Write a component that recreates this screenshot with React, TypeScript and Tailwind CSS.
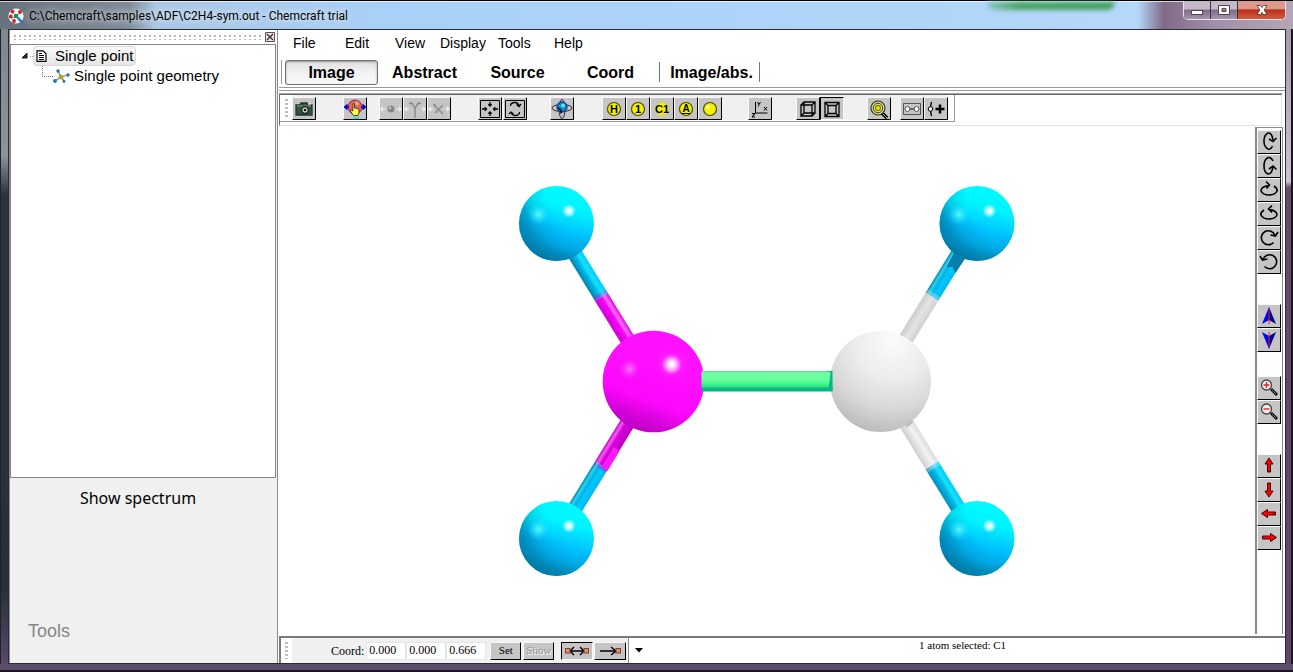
import type { ReactNode } from "react";

const raised =
  "flex shrink-0 items-center justify-center border border-t-[#f8f8f8] border-l-[#f8f8f8] border-r-black border-b-black bg-[#c5c5c5]";
const pressed =
  "flex shrink-0 items-center justify-center border border-t-black border-l-black border-r-[#f8f8f8] border-b-[#f8f8f8] bg-[#c5c5c5]";

function ToolButton({ label, down = false, disabled = false, children }: { label: string; down?: boolean; disabled?: boolean; children: ReactNode }) {
  return (
    <button aria-label={label} aria-pressed={down} disabled={disabled} className={`h-[23px] w-6 ${down ? pressed : raised}`}>
      <svg viewBox="0 0 22 20" width="22" height="20" fill="none" stroke="#000" strokeWidth="1.3">
        {children}
      </svg>
    </button>
  );
}

function SideButton({ label, children }: { label: string; children: ReactNode }) {
  return (
    <button aria-label={label} className={`h-6 w-6 ${raised}`}>
      <svg viewBox="0 0 22 22" width="22" height="22" fill="none" stroke="#000" strokeWidth="1.6">
        {children}
      </svg>
    </button>
  );
}

function Grip() {
  return <span className="my-1 w-[3px] shrink-0 bg-[repeating-linear-gradient(180deg,#bdbdbd_0_2px,transparent_2px_4px)]" />;
}

function YellowDisc({ text, under = false, pale = false }: { text: string; under?: boolean; pale?: boolean }) {
  return (
    <>
      <circle cx="11" cy="10" r="6.5" fill="#f4f000" stroke={pale ? "#d8d840" : "#4c4c00"} strokeWidth="1.2" />
      <text x="11" y={under ? 13 : 14} textAnchor="middle" fontSize={under ? 10 : 11} fontWeight="700" fontFamily="Liberation Sans, sans-serif" fill="#000" stroke="none">
        {text}
      </text>
      {under && <path d="M7 14.5h8" strokeWidth="1" />}
    </>
  );
}

function AppLogo() {
  return (
    <svg viewBox="0 0 16 16" width="16" height="16" aria-hidden="true">
      <circle cx="8" cy="8" r="7.6" fill="#f4f8f8" />
      <path d="M8 8L4 3.500M8 8l4.500-3M8 8l-5 3M8 8l5 5" stroke="#8aa" strokeWidth="1" />
      <circle cx="4.500" cy="3.500" r="1.900" fill="#d32020" />
      <circle cx="12" cy="4" r="1.900" fill="#d32020" />
      <circle cx="2.800" cy="8.500" r="1.900" fill="#c02828" />
      <circle cx="6" cy="13" r="1.900" fill="#d32020" />
      <rect x="6" y="6" width="4" height="4" fill="#18934d" />
      <path d="M10.500 10.500l3.500 4" stroke="#2379c9" strokeWidth="2.600" strokeLinecap="round" />
    </svg>
  );
}

function TitleBar() {
  return (
    <header className="flex h-[29px] shrink-0 items-start border-t border-black bg-[linear-gradient(90deg,#66717c_0%,#7f8c98_10%,#a9c7e4_12%,#a9d0f6_30%,#b4d7fa_88%,#806a88_90%,#a190a6_94%,#b5a6b7_100%)]">
      <div className="flex h-7 flex-1 items-center gap-[5px] border-t border-white/70 pl-2">
        <AppLogo />
        <h1 className="flex-1 font-[Roboto,sans-serif] text-xs text-black [text-shadow:0_0_6px_#ffffffb0,0_0_10px_#ffffffb0]">
          C:\Chemcraft\samples\ADF\C2H4-sym.out - Chemcraft trial
        </h1>
        <span className="mr-[68px] h-2 w-32 self-start rounded-b-full bg-[linear-gradient(90deg,#8ac8c0,#4aa463_25%,#45a05c)] blur-[2px]" />
      </div>
      <div className="mr-[7px] flex h-[19px] overflow-hidden rounded-b-[5px] border border-t-0 border-[#e9e2ea] bg-[#493a4e]">
        <button aria-label="Minimize" className="flex w-[27px] items-center justify-center border-r border-[#3c3040] bg-[linear-gradient(#c5b8c8_0_45%,#7e6c84_50%,#a594aa)]">
          <svg width="14" height="14" viewBox="0 0 14 14"><rect x="1.500" y="7.500" width="11" height="4" fill="#fff" stroke="#504756" /></svg>
        </button>
        <button aria-label="Maximize" className="flex w-[27px] items-center justify-center border-r border-[#3c3040] bg-[linear-gradient(#c5b8c8_0_45%,#7e6c84_50%,#a594aa)]">
          <svg width="14" height="14" viewBox="0 0 14 14"><path d="M1.500 2.500h11v9h-11zM5 5.500v3h4v-3z" fill="#fff" fillRule="evenodd" stroke="#504756" /></svg>
        </button>
        <button aria-label="Close" className="flex w-[47px] items-center justify-center bg-[linear-gradient(#dd9a8c_0_42%,#bb2f18_50%,#d35d3e)]">
          <svg width="14" height="14" viewBox="0 0 14 14"><path d="M2 2.500h3.500L7 4.500l1.500-2H12L9.200 7l2.800 4.500H8.500L7 9.500l-1.500 2H2L4.800 7z" fill="#fff" stroke="#59393c" strokeWidth=".9" /></svg>
        </button>
      </div>
    </header>
  );
}

function ProjectPanel() {
  return (
    <aside className="flex w-[269px] shrink-0 flex-col border-r border-l border-[#8b8b8b] bg-[#f0f0f0]">
      <div className="flex h-3.5 shrink-0 items-center gap-1 bg-white pl-1">
        <span className="h-[5px] flex-1 bg-[radial-gradient(circle_at_1px_1px,#b8b8b8_1px,transparent_1px)] bg-[size:5px_4px]" />
        <button aria-label="Close panel" className="mr-0.5">
          <svg width="10" height="10" viewBox="0 0 10 10"><path d="M.5.5h9v9h-9z" fill="#efe4ea" stroke="#6a4a58" /><path d="M2 2l6 6M8 2L2 8" stroke="#333" strokeWidth="1.400" /></svg>
        </button>
      </div>
      <ul className="mr-px flex-1 border border-[#858585] bg-white pt-px font-['Liberation_Sans',sans-serif] text-[15px] leading-5 text-black">
        <li>
          <div className="flex h-5 items-center pl-2">
            <svg width="14" height="12" viewBox="0 0 14 12"><path d="M8 3v5H3z" fill="#333" stroke="#111" /><path d="M11 6.500h3" stroke="#999" strokeDasharray="1 1" /></svg>
            <button className="flex h-5 items-center rounded-sm border border-[#d8d8d8] bg-linear-to-b from-[#f9f9f9] to-[#e6e6e6] px-0.5">
              <svg width="11" height="12" viewBox="0 0 11 12" fill="#fff" stroke="#000" strokeWidth="1.200"><path d="M1 .8h6l3 3v7.500H1z" /><path d="M3 3.500h3M3 5.500h5M3 7.500h5M3 9.500h5" strokeWidth="1" /></svg>
              <span className="ml-2">Single point</span>
            </button>
          </div>
          <ul>
            <li className="flex h-5 items-center pl-[31px]">
              <svg width="11" height="20" viewBox="0 0 11 20"><path d="M.5 0v10.500H11" stroke="#777" strokeDasharray="1 1" fill="none" /></svg>
              <svg width="17" height="15" viewBox="0 0 17 15"><path d="M8 8L5 2M8 8l7-2M8 8l-6 4M8 8l3 4" stroke="#5d8a96" strokeWidth="1.300" fill="none" /><circle cx="5" cy="2" r="1.700" fill="#2672ad" /><circle cx="15" cy="6" r="1.700" fill="#2672ad" /><circle cx="2" cy="12" r="1.900" fill="#2672ad" /><circle cx="11" cy="12.500" r="1.400" fill="#2672ad" /><circle cx="8" cy="8" r="2.500" fill="#b5a431" /></svg>
              <button className="ml-1">Single point geometry</button>
            </li>
          </ul>
        </li>
      </ul>
      <div className="flex h-[185px] shrink-0 flex-col justify-between px-[18px] pt-2 pb-5">
        <button className="w-[220px] font-['Noto_Sans',sans-serif] text-base leading-6 text-black">Show spectrum</button>
        <p className="font-['Liberation_Sans',sans-serif] text-lg leading-6 text-[#868686]">Tools</p>
      </div>
    </aside>
  );
}

function MenuBar() {
  return (
    <nav className="flex h-[26px] shrink-0 items-center pl-3.5 font-['Liberation_Sans',sans-serif] text-sm text-black">
      <button className="w-[52px] text-left">File</button>
      <button className="w-[50px] text-left">Edit</button>
      <button className="w-[45px] text-left">View</button>
      <button className="w-[58px] text-left">Display</button>
      <button className="w-14 text-left">Tools</button>
      <button className="text-left">Help</button>
    </nav>
  );
}

function ViewTabs() {
  const tab = "w-[93px] pt-0.5";
  return (
    <div role="tablist" className="flex h-8 shrink-0 items-center border-b border-[#9a9a9a] pt-px pl-0.5 font-['Liberation_Sans',sans-serif] text-base font-bold text-black">
      <span className="mr-[3px] h-6 w-px bg-[#999]" />
      <button role="tab" aria-selected="true" className="h-[25px] w-[93px] rounded-[3px] border border-[#6f6f6f] bg-linear-to-b from-[#dedede] via-[#f2f2f2] to-[#f8f8f8] pt-px leading-5 shadow-[inset_0_1px_2px_#9a9a9a]">Image</button>
      <button role="tab" aria-selected="false" className={tab}>Abstract</button>
      <button role="tab" aria-selected="false" className={tab}>Source</button>
      <button role="tab" aria-selected="false" className={tab}>Coord</button>
      <span className="ml-0.5 h-5 w-px bg-[#777]" />
      <button role="tab" aria-selected="false" className="w-[99px] pt-0.5 pl-1">Image/abs.</button>
      <span className="h-5 w-px bg-[#777]" />
    </div>
  );
}

function Toolbar() {
  return (
    <div className="mt-0.5 mr-[3px] shrink-0 border-t border-[#a0a0a0]">
      <div className="flex h-8 items-start border border-t-[#696969] border-r-[#e4e4e4] border-b-[#e4e4e4] border-l-[#696969]">
        <div className="flex h-[27px] gap-1 border-r border-b border-[#9a9a9a] pr-1.5 pl-[5px]">
          <Grip />
          <div className="flex h-[25px] items-end bg-[#f0f0f0]">
            <ToolButton label="Save image">
              <path d="M3 6h4l1-2h6l1 2h4v10H3z" fill="#35543f" stroke="#1d3827" /><path d="M4 7h14" stroke="#789078" /><circle cx="12" cy="11" r="3.300" fill="#c7cfc4" stroke="#10251a" /><circle cx="12" cy="11" r="1.300" fill="#111" stroke="none" /><path d="M15 5h3" stroke="#dfe8dd" />
            </ToolButton>
            <span className="w-[27px]" />
            <ToolButton label="Rotate by mouse">
              <circle cx="11" cy="8" r="7" fill="#e26363" stroke="#812" strokeWidth=".8" /><circle cx="13" cy="4.500" r="2" fill="#f4a0a0" stroke="none" /><path d="M0 8h5M3.500 5.500L1 8l2.500 2.500M22 8h-5M18.500 5.500L21 8l-2.500 2.500" stroke="#0000d0" strokeWidth="1.600" /><path d="M9 10.500V5q.8-1 1.600 0v4l1.500.3 1.500.5 1.400.7v3l-1 3H9.500L6 11.500q.5-1.500 3 .5z" fill="#ffff50" stroke="#352000" strokeWidth=".8" /><path d="M9 17.500h6V20H9z" fill="#50d4cf" stroke="none" />
            </ToolButton>
            <span className="w-3" />
            <ToolButton label="Drag atom" disabled>
              <circle cx="11" cy="10" r="3.500" fill="#888" stroke="none" /><path d="M6 10H1M3 8l-2 2 2 2M16 10h5M19 8l2 2-2 2" stroke="#f0f0f0" strokeWidth="1.200" /><circle cx="10" cy="9" r="1.200" fill="#ccc" stroke="none" />
            </ToolButton>
            <ToolButton label="Drag fragment" disabled>
              <path d="M11 19V9L7 3M11 9l4-6M5 4.500h3M14 4.500h3" stroke="#8c8c8c" strokeWidth="1.500" /><path d="M5 10H1M3 8l-2 2 2 2M17 10h4M19 8l2 2-2 2" stroke="#f0f0f0" strokeWidth="1.200" />
            </ToolButton>
            <ToolButton label="Drag bond" disabled>
              <path d="M6 6l9 9M7 14l8-8M5 6h3" stroke="#8c8c8c" strokeWidth="1.500" /><path d="M5 10H1M3 8l-2 2 2 2M17 10h4M19 8l2 2-2 2" stroke="#f0f0f0" strokeWidth="1.200" />
            </ToolButton>
            <span className="w-[27px]" />
            <ToolButton label="Center">
              <path d="M1.500 1.500h19v17h-19z" strokeWidth="1" /><path d="M11 3v4M9.300 5.300L11 7l1.700-1.700M11 17v-4M9.300 14.700L11 13l1.700 1.700M3 10h4.500M5.800 8.300L7.500 10l-1.700 1.700M19 10h-4.500M16.200 8.300L14.500 10l1.700 1.700" />
            </ToolButton>
            <span className="w-px" />
            <ToolButton label="Reset rotation">
              <path d="M1.500 1.500h19v17h-19z" strokeWidth="1" /><path d="M6.500 7q0-3.500 4.500-3.500 3.500 0 4 4M12.500 5.500l2.500 2 2-2.500M15.500 13q0 3.500-4.500 3.500-3.500 0-4-4M5 15l2-2 2.500 2" />
            </ToolButton>
            <span className="w-[23px]" />
            <ToolButton label="Orbitals">
              <ellipse cx="11" cy="10" rx="3" ry="9.500" stroke="#402040" strokeWidth="1" /><ellipse cx="11" cy="9" rx="10" ry="3.500" stroke="#402040" strokeWidth="1" /><circle cx="11" cy="8" r="5" fill="#1787c9" stroke="#075082" /><circle cx="12" cy="6.500" r="2" fill="#62e1ef" stroke="none" /><path d="M7 8.500l3 3v3" stroke="#101040" strokeWidth="1.700" />
            </ToolButton>
            <span className="w-7" />
            <ToolButton label="Element labels"><YellowDisc text="H" /></ToolButton>
            <ToolButton label="Number labels"><YellowDisc text="1" /></ToolButton>
            <ToolButton label="Element and number labels"><YellowDisc text="C1" pale /></ToolButton>
            <ToolButton label="Atom types"><YellowDisc text="A" under /></ToolButton>
            <ToolButton label="No labels"><YellowDisc text="" /><circle cx="9" cy="8" r="2" fill="#fffbb0" stroke="none" /></ToolButton>
            <span className="w-[26px]" />
            <ToolButton label="Show axes">
              <path d="M6.500 3v11h12M6.500 14L3 18" strokeWidth="1" /><path d="M8.500 3L10 5.500 11.500 3M10 5.500L9 7.500M15 8l3 3.500M18 8l-3 3.500M3 14.500h3l-3 3.500h3" strokeWidth="1" />
            </ToolButton>
            <span className="w-6" />
            <ToolButton label="Parallel projection">
              <path d="M4 6h11v11H4zM7 3h11v11H7zM4 6l3-3M15 6l3-3M15 17l3-3M4 17l3-3" />
            </ToolButton>
            <ToolButton label="Perspective projection" down>
              <path d="M4 3.500h14v14H4zM7 6.500h8v8H7zM4 3.500l3 3M18 3.500l-3 3M18 17.500l-3-3M4 17.500l3-3" />
            </ToolButton>
            <span className="w-[23px]" />
            <ToolButton label="Find atom">
              <path d="M14 14l5 5" strokeWidth="3.500" /><path d="M15 15l4 4" stroke="#b5b13a" strokeWidth="1" /><circle cx="10" cy="9" r="7" fill="#e0e0c0" stroke="#333300" strokeWidth="1.100" /><circle cx="10" cy="9" r="4.800" fill="#e4e48c" stroke="#3d3d10" strokeWidth="1" /><circle cx="10" cy="9" r="2.500" fill="#f6ed00" stroke="#888500" />
            </ToolButton>
            <span className="w-[9px]" />
            <ToolButton label="Select bond">
              <path d="M2.500 4.500h17v11h-17z" stroke="#555" strokeWidth="1" /><path d="M9 10h4" strokeWidth="1" /><circle cx="6.500" cy="10" r="2.500" fill="#fff" stroke="#555" strokeWidth="1" /><circle cx="15.500" cy="10" r="2.500" fill="#fff" stroke="#555" strokeWidth="1" />
            </ToolButton>
            <ToolButton label="Add atom">
              <path d="M6.500 3L5.500 8M5.500 12l1 5" /><circle cx="5.500" cy="10" r="2.300" fill="#fff" strokeWidth="1" /><path d="M10.500 10h9M15 5.500v9" strokeWidth="2.500" />
            </ToolButton>
          </div>
        </div>
      </div>
    </div>
  );
}

function Bond({ x, y, angle, near, far }: { x: number; y: number; angle: number; near: string; far: string }) {
  return (
    <g transform={`translate(${x} ${y}) rotate(${angle})`}>
      <rect x="30" y="-7.500" width="56" height="15" fill={near} />
      <rect x="86" y="-7.500" width="99" height="15" fill={far} />
      <rect x="82" y="-7.500" width="4" height="15" fill={far} opacity=".4" />
    </g>
  );
}

function Hydrogen({ x, y }: { x: number; y: number }) {
  return (
    <g transform={`translate(${x} ${y})`}>
      <circle r="37.500" fill="url(#hBase)" />
      <circle r="37.500" fill="url(#hShade)" />
      <circle cx="-18" cy="-9" r="11" fill="url(#hGlow)" />
      <circle cx="12.500" cy="-12.500" r="7" fill="url(#shine)" />
    </g>
  );
}

function MoleculeView() {
  return (
    <svg role="img" aria-label="Ethylene molecule" viewBox="279 126 975 510" className="min-h-0 min-w-0 flex-1 bg-white">
      <defs>
        <linearGradient id="hBase" x1=".75" y1=".05" x2=".5" y2="1">
          <stop offset="0" stopColor="#00fbff" /><stop offset=".26" stopColor="#00f4ff" /><stop offset=".6" stopColor="#00c0ff" /><stop offset=".8" stopColor="#00b8f8" /><stop offset="1" stopColor="#009cd4" />
        </linearGradient>
        <radialGradient id="hShade" cx=".85" cy=".15" r="1">
          <stop offset=".5" stopColor="#007098" stopOpacity="0" /><stop offset=".7" stopColor="#007098" stopOpacity=".22" /><stop offset=".86" stopColor="#007098" stopOpacity=".6" /><stop offset="1" stopColor="#006c94" stopOpacity=".75" />
        </radialGradient>
        <radialGradient id="hGlow"><stop offset="0" stopColor="#60ffff" stopOpacity=".9" /><stop offset="1" stopColor="#20e0ff" stopOpacity="0" /></radialGradient>
        <radialGradient id="shine"><stop offset="0" stopColor="#fff" /><stop offset=".3" stopColor="#fff" stopOpacity=".85" /><stop offset="1" stopColor="#fff" stopOpacity="0" /></radialGradient>
        <linearGradient id="selectedBase" x1=".62" y1=".3" x2=".36" y2="1">
          <stop offset="0" stopColor="#ff10ff" /><stop offset=".56" stopColor="#fc08fc" /><stop offset=".74" stopColor="#e004e4" /><stop offset="1" stopColor="#b800c0" />
        </linearGradient>
        <radialGradient id="pinkGlow"><stop offset="0" stopColor="#ff78ff" /><stop offset="1" stopColor="#ff20ff" stopOpacity="0" /></radialGradient>
        <radialGradient id="whiteBase" cx=".62" cy=".1" r=".95">
          <stop offset="0" stopColor="#fbfbfb" /><stop offset=".4" stopColor="#ececec" /><stop offset=".7" stopColor="#d8d8d8" /><stop offset="1" stopColor="#b8b8b8" />
        </radialGradient>
        <linearGradient id="bondCyan" x1="0" y1="0" x2="0" y2="1"><stop offset="0" stopColor="#00cdf8" /><stop offset=".35" stopColor="#18e0ff" /><stop offset=".6" stopColor="#00b4e4" /><stop offset="1" stopColor="#0084ac" /></linearGradient>
        <linearGradient id="bondPink" x1="0" y1="0" x2="0" y2="1"><stop offset="0" stopColor="#e400e4" /><stop offset=".3" stopColor="#ff70ff" /><stop offset=".5" stopColor="#f800f8" /><stop offset="1" stopColor="#d000d4" /></linearGradient>
        <linearGradient id="bondCyanLit" x1="0" y1="0" x2="0" y2="1"><stop offset="0" stopColor="#0088b0" /><stop offset=".2" stopColor="#30d0ee" /><stop offset=".38" stopColor="#00b4e4" /><stop offset=".6" stopColor="#00c8ff" /><stop offset="1" stopColor="#00b8f0" /></linearGradient>
        <linearGradient id="bondCyanLitFlip" x1="0" y1="1" x2="0" y2="0"><stop offset="0" stopColor="#0088b0" /><stop offset=".2" stopColor="#30d0ee" /><stop offset=".38" stopColor="#00b4e4" /><stop offset=".6" stopColor="#00c8ff" /><stop offset="1" stopColor="#00b8f0" /></linearGradient>
        <linearGradient id="bondCyanFlip" x1="0" y1="1" x2="0" y2="0"><stop offset="0" stopColor="#00cdf8" /><stop offset=".35" stopColor="#18e0ff" /><stop offset=".6" stopColor="#00b4e4" /><stop offset="1" stopColor="#0090bc" /></linearGradient>
        <linearGradient id="bondPinkLit" x1="0" y1="0" x2="0" y2="1"><stop offset="0" stopColor="#c400c8" /><stop offset=".2" stopColor="#f060f0" /><stop offset=".4" stopColor="#dc00dc" /><stop offset=".6" stopColor="#d000d4" /><stop offset="1" stopColor="#b800bc" /></linearGradient>
        <linearGradient id="bondWhite" x1="0" y1="0" x2="0" y2="1"><stop offset="0" stopColor="#d0d0d0" /><stop offset=".5" stopColor="#e4e4e4" /><stop offset="1" stopColor="#ccc" /></linearGradient>
        <linearGradient id="bondWhiteLit" x1="0" y1="1" x2="0" y2="0"><stop offset="0" stopColor="#dcdcdc" /><stop offset=".4" stopColor="#f2f2f2" /><stop offset="1" stopColor="#cfcfcf" /></linearGradient>
        <linearGradient id="bondGreen" x1="0" y1="0" x2="0" y2="1"><stop offset="0" stopColor="#50e894" /><stop offset=".12" stopColor="#72ffa0" /><stop offset=".4" stopColor="#6cff9c" /><stop offset=".65" stopColor="#3df58c" /><stop offset=".78" stopColor="#2ce084" /><stop offset=".84" stopColor="#08b488" /><stop offset="1" stopColor="#08b488" /></linearGradient>
      </defs>
      <Bond x={556} y={224} angle={58.4} near="url(#bondCyan)" far="url(#bondPink)" />
      <Bond x={556} y={538.5} angle={-58.4} near="url(#bondCyanLit)" far="url(#bondPinkLit)" />
      <path d="M601 467L607 471 619 451 613 447Z" fill="#ff18f8" />
      <Bond x={976.5} y={223.5} angle={121.6} near="url(#bondCyanLitFlip)" far="url(#bondWhite)" />
      <path d="M965 258L955 273 952 267 946 267 954 252Z" fill="#087fa8" />
      <Bond x={976.5} y={538.5} angle={-121.6} near="url(#bondCyanFlip)" far="url(#bondWhiteLit)" />
      <Hydrogen x={556} y={223.5} />
      <Hydrogen x={976.5} y={223.5} />
      <Hydrogen x={556} y={538.5} />
      <Hydrogen x={976.5} y={538.5} />
      <circle cx="653" cy="381.500" r="50.800" fill="url(#selectedBase)" />
      <circle cx="629" cy="369" r="11" fill="url(#pinkGlow)" />
      <circle cx="671" cy="364.500" r="18" fill="url(#pinkGlow)" opacity=".6" />
      <circle cx="671" cy="364.500" r="10" fill="url(#shine)" />
      <circle cx="880" cy="381.500" r="50.500" fill="url(#whiteBase)" />
      <path d="M905 426l4-5 4 0-2 3-4 3z" fill="#bcbcbc" />
      <rect x="701" y="371" width="131" height="20.500" rx="1" fill="url(#bondGreen)" />
      <path d="M825 371h7v20h-7v-1l3-2 1-6 1-10z" fill="#08b488" />
    </svg>
  );
}

const redArrow = "M11 3l4 6H12.500v8h-3V9H7z";

function SideBar() {
  return (
    <div className="mt-px mr-0.5 mb-0.5 flex w-[28px] shrink-0 flex-col border-t border-r border-l-2 border-[#8b8b8b] pt-0.5">
      <SideButton label="Rotate down"><path d="M14.500 15q-2 4-4.500 3-4-2-4-8t4-8q4-.5 5 7M11 8l4 2.500L18.500 7" /></SideButton>
      <SideButton label="Rotate up"><path d="M15 6q-2-4-5-3.500-4 2-4 8.500t4 8q4 0 5-7.500M11 14l4-3 3.500 3.500" /></SideButton>
      <SideButton label="Rotate right"><path d="M16 7q4 3 3 5-2 4-8 4t-8-4q0-4.500 8-5.500M8 2.500L11.500 6 8.500 9.500" /></SideButton>
      <SideButton label="Rotate left"><path d="M6 7q-4 3-3 5 2 4 8 4t8-4q0-4.500-8-5.500M14 2.500L10.500 6l3.500 3.500" /></SideButton>
      <SideButton label="Rotate clockwise"><path d="M15.500 15.500A7 7 0 1 1 17 8.500M12.500 8l5 1 2.500-4" /></SideButton>
      <SideButton label="Rotate counterclockwise"><path d="M6.500 15.500A7 7 0 1 0 5 8.500M9.500 8l-5 1L2 5" /></SideButton>
      <div className="h-[30px] shrink-0" />
      <SideButton label="Move forward"><path d="M11 2L4 19l7-4z" fill="#0000ee" stroke="none" /><path d="M11 2l7 17-7-4z" fill="#000088" stroke="none" /><path d="M11 4v15" stroke="#e02040" strokeWidth="1" /></SideButton>
      <SideButton label="Move back"><path d="M11 20L4 3l7 4z" fill="#0000ee" stroke="none" /><path d="M11 20l7-17-7 4z" fill="#000088" stroke="none" /><path d="M11 3v15" stroke="#e02040" strokeWidth="1" /></SideButton>
      <div className="h-6 shrink-0" />
      <SideButton label="Zoom in"><path d="M13 12l6 6" strokeWidth="2.800" /><path d="M14 13l4 4" stroke="#bbb340" strokeWidth=".8" /><circle cx="8.500" cy="8" r="5" fill="#eee" stroke="#444" strokeWidth="1.300" /><path d="M5.500 8h6M8.500 5v6" stroke="#e22" strokeWidth="1.400" /></SideButton>
      <SideButton label="Zoom out"><path d="M13 12l6 6" strokeWidth="2.800" /><path d="M14 13l4 4" stroke="#bbb340" strokeWidth=".8" /><circle cx="8.500" cy="8" r="5" fill="#eee" stroke="#444" strokeWidth="1.300" /><path d="M5.500 8h6" stroke="#e22" strokeWidth="1.400" /></SideButton>
      <div className="h-[30px] shrink-0" />
      <SideButton label="Pan up"><path d={redArrow} fill="#f00" stroke="#400" strokeWidth="1" /></SideButton>
      <SideButton label="Pan down"><path d={redArrow} transform="rotate(180 11 10.500)" fill="#f00" stroke="#400" strokeWidth="1" /></SideButton>
      <SideButton label="Pan left"><path d={redArrow} transform="rotate(-90 11 10.500)" fill="#f00" stroke="#400" strokeWidth="1" /></SideButton>
      <SideButton label="Pan right"><path d={redArrow} transform="rotate(90 11 10.500)" fill="#f00" stroke="#400" strokeWidth="1" /></SideButton>
    </div>
  );
}

function StatusBar() {
  const field = "h-[18px] w-10 border border-[#e2e6ea] bg-white pl-0.5 text-xs text-black";
  return (
    <footer className="flex h-[27px] shrink-0 border-t-2 border-l-2 border-[#7a7a7a] bg-white pl-1 font-['Liberation_Serif',serif] text-xs text-black">
      <Grip />
      <div className="ml-1 flex items-center border-r border-[#8f8f8f] bg-[#f0f0f0] pr-0.5 pl-[39px]">
        <span className="mr-0.5">Coord:</span>
        <input aria-label="X coordinate" className={field} defaultValue="0.000" />
        <input aria-label="Y coordinate" className={field} defaultValue="0.000" />
        <input aria-label="Z coordinate" className={field} defaultValue="0.666" />
        <button className={`ml-1 h-[18px] w-[31px] text-[11px] ${raised}`}>Set</button>
        <button disabled className={`ml-0.5 h-[18px] w-[31px] text-[11px] text-[#929292] [text-shadow:1px_1px_#fff] ${raised}`}>Show</button>
        <button aria-label="Move both sides" aria-pressed="true" className={`ml-[7px] h-[18px] w-8 ${pressed}`}>
          <svg width="26" height="12" viewBox="0 0 26 12" fill="none" stroke="#000" strokeWidth="1.400"><path d="M7 6h12M10 2L6 6l4 4M16 2l4 4-4 4" /><rect x="1.500" y="3.500" width="4.500" height="4.500" fill="#f08a6c" stroke="#743" strokeWidth="1" /><rect x="20" y="3.500" width="4.500" height="4.500" fill="#f08a6c" stroke="#743" strokeWidth="1" /></svg>
        </button>
        <button aria-label="Move one side" className={`ml-px h-[18px] w-8 ${raised}`}>
          <svg width="26" height="12" viewBox="0 0 26 12" fill="none" stroke="#000" strokeWidth="1.400"><path d="M3 6h15M14 2l5 4-5 4" /><rect x="19" y="3.500" width="4.500" height="4.500" fill="#f08a6c" stroke="#743" strokeWidth="1" /></svg>
        </button>
      </div>
      <button aria-label="More options" className="px-1.5"><svg width="8" height="5" viewBox="0 0 8 5"><path d="M0 0h8L4 4.500z" /></svg></button>
      <p className="ml-auto w-[366px] text-[11px] leading-[14px]">1 atom selected: C1</p>
    </footer>
  );
}

export default function App() {
  return (
    <div className="flex h-screen min-h-[640px] flex-col bg-[#59496a]">
      <TitleBar />
      <div className="flex min-h-0 flex-1">
        <div className="w-2 shrink-0 border-l border-[#222] bg-[linear-gradient(#7d8792_0%,#8a949c_20%,#2a3440_26%,#25303a_88%,#59496a_100%)]" />
        <main className="flex min-w-0 flex-1 border border-[#2c2c30] bg-white">
          <ProjectPanel />
          <section className="ml-px flex min-w-0 flex-1 flex-col">
            <MenuBar />
            <ViewTabs />
            <div className="mt-0.5 h-px shrink-0 bg-[#9a9a9a]" />
            <Toolbar />
            <div className="flex min-h-0 flex-1">
              <MoleculeView />
              <SideBar />
            </div>
            <StatusBar />
          </section>
        </main>
        <div className="w-[7px] shrink-0 border-r-2 border-[#1c1420] bg-[linear-gradient(#a899ac_0%,#cdc2d0_24%,#654a6c_25%,#5d4668_100%)]" />
      </div>
      <div className="h-2 shrink-0 border-b-2 border-[#1c1420] bg-[#5c4d6c]" />
    </div>
  );
}
